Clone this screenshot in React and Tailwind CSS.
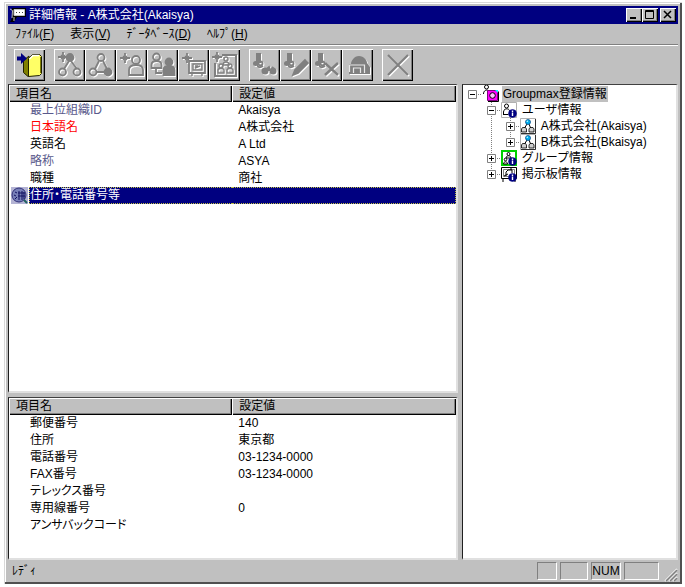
import React, { useState } from "react";

const topItems = [
  { id: 1, name: "最上位組織ID", value: "Akaisya", color: "text-[#5a5a8c]" },
  { id: 2, name: "日本語名", value: "A株式会社", color: "text-[#ff0000]" },
  { id: 3, name: "英語名", value: "A Ltd" },
  { id: 4, name: "略称", value: "ASYA", color: "text-[#5a5a8c]" },
  { id: 5, name: "職種", value: "商社" },
  { id: 6, name: "住所・電話番号等", value: "", hasDetail: true },
];

const detailItems = [
  { id: 1, name: "郵便番号", value: "140" },
  { id: 2, name: "住所", value: "東京都" },
  { id: 3, name: "電話番号", value: "03-1234-0000" },
  { id: 4, name: "FAX番号", value: "03-1234-0000" },
  { id: 5, name: "テレックス番号", value: "" },
  { id: 6, name: "専用線番号", value: "0" },
  { id: 7, name: "アンサバックコード", value: "" },
];

const menus = [
  { label: "ﾌｧｲﾙ", accessKey: "F" },
  { label: "表示", accessKey: "V" },
  { label: "ﾃﾞｰﾀﾍﾞｰｽ", accessKey: "D" },
  { label: "ﾍﾙﾌﾟ", accessKey: "H" },
];

/* ---------- toolbar icons ---------- */

// draws the shape twice so that it looks engraved like a disabled button
const Engraved = ({ children }) => (
  <svg viewBox="0 0 26 26" className="w-[26px] h-[26px]" fill="none" stroke="currentColor" strokeWidth="1.8">
    <g className="text-white" transform="translate(1 1)">{children}</g>
    <g className="text-[#808080]">{children}</g>
  </svg>
);

const Star = ({ x, y }) => (
  <g>
    <path d={`M${x - 5} ${y}h10M${x} ${y - 5}v10`} strokeWidth="1.800" />
    <path d={`M${x - 2} ${y - 2}l4 4M${x + 2} ${y - 2}l-4 4`} strokeWidth="1.200" />
  </g>
);

const Handset = () => (
  <g>
    <path d="M4 1h5v10H4z" fill="currentColor" stroke="none" />
    <circle cx="3.500" cy="11.500" r="2.500" fill="currentColor" stroke="none" />
    <path d="M5 12c1 4 3 4 6 2" strokeWidth="2" />
    <circle cx="8.500" cy="11.500" r="2" />
  </g>
);

const ExitIcon = () => (
  <svg viewBox="0 0 26 26" className="w-[26px] h-[26px]">
    <path d="M6.500 8.500L12 4v20.500h-1l-4.500-4z" fill="#808000" stroke="#202000" strokeWidth="1" />
    <path d="M11.500 6.500l4-4h7l2 2v17l-2 2-11 1z" fill="#ffff66" stroke="#202000" strokeWidth="1" />
    <path d="M12.500 7l3.500-3.500h6" stroke="#fff" strokeWidth="1.500" fill="none" />
    <path d="M23.500 5v16" stroke="#808000" strokeWidth="1" />
    <path d="M0 4.500h4V1l6 5.500L4 12V8.500H0z" fill="#000080" />
  </svg>
);

const AddTopIcon = () => (
  <Engraved>
    <Star x={6} y={5} />
    <circle cx="13" cy="5.500" r="3.500" fill="currentColor" />
    <path d="M12 9L7 17M14 9l6 8" />
    <circle cx="5.500" cy="20" r="3.500" />
    <circle cx="20" cy="20" r="3.500" />
  </Engraved>
);

const AddChildIcon = () => (
  <Engraved>
    <circle cx="13" cy="5.500" r="3.500" />
    <path d="M11 9l-4 8M15 9l4 8M9 20h8" />
    <circle cx="5" cy="20" r="3.500" />
    <circle cx="20" cy="20" r="3.500" fill="currentColor" />
  </Engraved>
);

const AddUserIcon = () => (
  <Engraved>
    <Star x={6} y={6} />
    <circle cx="17" cy="8" r="4" />
    <path d="M10 23v-5c0-4 4-5 7-5s7 1 7 5v5z" />
  </Engraved>
);

const MoveUserIcon = () => (
  <Engraved>
    <circle cx="6.500" cy="5" r="3.500" />
    <path d="M1.500 16v-3c0-3 2-4 5-4s5 1 5 4v3zM6 16v5h6" />
    <circle cx="19" cy="10" r="3.500" fill="currentColor" />
    <path d="M13.500 23v-5c0-3 2-4 5.500-4s5.500 1 5.500 4v5z" fill="currentColor" />
  </Engraved>
);

const AddBoardIcon = () => (
  <Engraved>
    <Star x={6} y={6} />
    <path d="M8 9h16v12H8z" />
    <path d="M12 12h9v6h-9zM11 21v3M21 21v3M14 16l5-2M14 14h3" strokeWidth="1.400" />
  </Engraved>
);

const AddGroupIcon = () => (
  <Engraved>
    <Star x={5} y={5} />
    <path d="M10 3h14v21H3V11" strokeWidth="2" />
    <g strokeWidth="1.400">
      <circle cx="14" cy="7" r="2" />
      <path d="M11 13c0-4 6-4 6 0z" />
      <circle cx="9" cy="14" r="2" />
      <circle cx="18" cy="14" r="2" />
      <path d="M6 21v-3c0-2 6-2 6 0v3zM15 21v-3c0-2 6-2 6 0v3z" />
    </g>
  </Engraved>
);

const SearchUserIcon = () => (
  <Engraved>
    <Handset />
    <circle cx="13" cy="19" r="3.500" fill="currentColor" stroke="none" />
    <circle cx="21" cy="19" r="3.500" fill="currentColor" stroke="none" />
    <path d="M12 19l5-4 1 3h-3M20 15l2 2" />
  </Engraved>
);

const EditIcon = () => (
  <Engraved>
    <Handset />
    <path d="M10 23l2-5L22 8l3 3-10 10z" fill="currentColor" />
  </Engraved>
);

const RemoveIcon = () => (
  <Engraved>
    <Handset />
    <path d="M11 11l13 12M24 11L11 23" strokeWidth="2.500" />
  </Engraved>
);

const HomeIcon = () => (
  <Engraved>
    <path d="M4 12h2c0-3 3-8 8-8s8 4 8 7l3 4v7H4z" fill="currentColor" stroke="none" />
    <path d="M4.500 20v-7h15v8M8.500 21v-5h7v5" stroke="#e8e8e8" strokeWidth="1.200" />
  </Engraved>
);

const CrossIcon = () => (
  <Engraved>
    <path d="M3 3l20 20M23 3L3 23" strokeWidth="2.200" />
  </Engraved>
);

const toolGroups = [
  [{ title: "終了", icon: ExitIcon, enabled: true }],
  [
    { title: "最上位組織追加", icon: AddTopIcon },
    { title: "組織追加", icon: AddChildIcon },
    { title: "ユーザ追加", icon: AddUserIcon },
    { title: "兼任ユーザ追加", icon: MoveUserIcon },
    { title: "掲示板追加", icon: AddBoardIcon },
    { title: "グループ追加", icon: AddGroupIcon },
  ],
  [
    { title: "参照", icon: SearchUserIcon },
    { title: "変更", icon: EditIcon },
    { title: "解除", icon: RemoveIcon },
    { title: "格納", icon: HomeIcon },
  ],
  [{ title: "削除", icon: CrossIcon }],
];

/* ---------- tree icons ---------- */

const InfoBadge = () => (
  <g>
    <circle cx="11.500" cy="11.500" r="4" fill="#000080" stroke="#000080" strokeWidth=".5" />
    <path d="M11.500 8.500v1.500M11.500 10.500v3.500" stroke="#fff" strokeWidth="1.400" />
  </g>
);

const RootIcon = () => (
  <svg viewBox="0 0 18 16" className="w-[18px] h-4 overflow-visible" fill="none" stroke="#000">
    <circle cx="4.500" cy="1" r="2" fill="#fff" />
    <path d="M1.500 8c0-5 6-5 6-1" fill="#fff" />
    <path d="M5.500 4.500h10v10h-10z" fill="#ff00ff" stroke="#800080" />
    <path d="M6 15.500h10.500v-10" />
    <circle cx="10.500" cy="9.500" r="2.800" fill="#ffc0ff" />
    <path d="M13 4h3v3z" fill="#00ffff" stroke="none" />
  </svg>
);

const UserInfoIcon = () => (
  <svg viewBox="0 0 16 16" className="w-4 h-4" fill="none" stroke="#000">
    <path d="M.5.5h15v15H.5z" fill="#fff" stroke="#b0b0b0" />
    <circle cx="5.500" cy="4" r="2" />
    <path d="M2.500 13V10c0-4 6-4 6-1M2.500 12.500h5" />
    <InfoBadge />
  </svg>
);

const CompanyIcon = () => (
  <svg viewBox="0 0 16 16" className="w-4 h-4" fill="none" stroke="#000">
    <path d="M.5.5h15v15H.5z" fill="#fff" stroke="#b0b0b0" />
    <path d="M15.500 1v14.500H1" stroke="#303030" />
    <path d="M7 6l-3 5M9 6l2 5" />
    <circle cx="8" cy="4" r="2.500" fill="#00b0f0" stroke="#004080" strokeWidth=".7" />
    <circle cx="7.300" cy="3.300" r=".8" fill="#c0ffff" stroke="none" />
    <path d="M1.500 14v-3l1-1.500h3l1 1.500v3zM9 14v-3l1-1.500h3l1 1.500v3z" fill="#d0d0d0" strokeWidth=".8" />
  </svg>
);

const GroupInfoIcon = () => (
  <svg viewBox="0 0 16 16" className="w-4 h-4" fill="none" stroke="#000">
    <path d="M1 1h14v14H1z" fill="#fff" stroke="#00d000" strokeWidth="2" />
    <circle cx="7.500" cy="4" r="1.500" />
    <path d="M5 8c0-3 5-3 5 0z" />
    <circle cx="4.500" cy="9.500" r="1.300" />
    <path d="M2.500 14c0-3 4-3 4 0z" />
    <InfoBadge />
  </svg>
);

const BoardInfoIcon = () => (
  <svg viewBox="0 0 16 16" className="w-4 h-4" fill="none" stroke="#000">
    <path d="M.5 1.500h15v11H.5zM2 13v3M14 13v3" fill="#fff" />
    <path d="M2.500 3.500h11v7h-11z" stroke="#808080" />
    <path d="M5 10V6l2-2h4v3M3 10l4-2M10 2v2" />
    <InfoBadge />
  </svg>
);

const treeData = {
  id: "root",
  label: "Groupmax登録情報",
  icon: RootIcon,
  children: [
    {
      id: "user",
      label: "ユーザ情報",
      icon: UserInfoIcon,
      children: [
        { id: "a", label: "A株式会社(Akaisya)", icon: CompanyIcon, children: [] },
        { id: "b", label: "B株式会社(Bkaisya)", icon: CompanyIcon, children: [] },
      ],
    },
    { id: "group", label: "グループ情報", icon: GroupInfoIcon, children: [] },
    { id: "board", label: "掲示板情報", icon: BoardInfoIcon, children: [] },
  ],
};

// one 19px column of the dotted guide lines
const Guide = ({ path }) => (
  <svg viewBox="0 0 19 16" className="w-[19px] h-4 shrink-0">
    <path d={path} fill="none" stroke="#808080" strokeDasharray="1 1" />
  </svg>
);

const TreeNode = ({ node, guides = [], isRoot, isLast, expanded, onToggle, selected, onSelect }) => {
  const Icon = node.icon;
  const open = expanded.includes(node.id);
  const vertical = isRoot ? "" : isLast ? "M9.5 0v8" : "M9.5 0v16";
  return (
    <li>
      <div className="flex items-center h-4">
        {guides.map((line, index) => (
          <Guide key={index} path={line ? "M9.5 0v16" : ""} />
        ))}
        <button className="shrink-0" aria-label={node.label + (open ? "を閉じる" : "を開く")} onClick={() => onToggle(node.id)}>
          <svg viewBox="0 0 19 16" className="block w-[19px] h-4">
            <path d={vertical + "M9 8.500h10"} fill="none" stroke="#808080" strokeDasharray="1 1" />
            <path d="M5.500 4.500h8v8h-8z" fill="#fff" stroke="#808080" />
            <path d={open ? "M7 8.500h5" : "M7 8.500h5M9.500 6v5"} stroke="#000" />
          </svg>
        </button>
        <span className="w-5 shrink-0 flex">
          <Icon />
        </span>
        <button
          className={`px-px h-4 leading-4 whitespace-nowrap ${selected === node.id ? "bg-[#c0c0c0]" : ""}`}
          onClick={() => onSelect(node.id)}
        >
          {node.label}
        </button>
      </div>
      {open && node.children.length > 0 && (
        <ul>
          {node.children.map((child, index) => (
            <TreeNode
              key={child.id}
              node={child}
              guides={isRoot ? [false] : [...guides, !isLast]}
              isLast={index === node.children.length - 1}
              expanded={expanded}
              onToggle={onToggle}
              selected={selected}
              onSelect={onSelect}
            />
          ))}
        </ul>
      )}
    </li>
  );
};

/* ---------- list view ---------- */

const DetailMark = () => (
  <svg viewBox="0 0 17 17" className="w-[17px] h-[17px] shrink-0">
    <path d="M0 0h17v17H0z" fill="#b4b4d4" />
    <circle cx="8" cy="8" r="7" fill="#7880b8" stroke="#303078" />
    <path d="M4 5l2 1M3 8l2 1M4 12l2-2M8 4v9M11 4v9M13 5v7M7 6h7M7 9h7" stroke="#101060" fill="none" />
    <path d="M13 13l3 3" stroke="#206060" strokeWidth="2" />
  </svg>
);

const ItemTable = ({ items, selected, onSelect }) => (
  <table className="w-full table-fixed border-collapse [font-feature-settings:'palt']">
    <thead>
      <tr className="h-[17px] leading-4 text-left">
        {["項目名", "設定値"].map((title) => (
          <th
            key={title}
            scope="col"
            className="w-1/2 p-0 pl-[7px] font-normal bg-[#c0c0c0] shadow-[inset_1px_1px_#fff,inset_-1px_-1px_#000,inset_-2px_-2px_#808080]"
          >
            {title}
          </th>
        ))}
      </tr>
    </thead>
    <tbody>
      {items.map((item) => {
        const active = selected === item.id;
        const line = active ? "bg-[#000080] text-white border-[#c0c040]" : "border-transparent " + (item.color || "");
        return (
          <tr key={item.id} className="h-[17px] leading-[15px]" onClick={() => onSelect && onSelect(item.id)}>
            <td className="p-0">
              <div className="flex">
                <span className="w-[20px] pl-[2px] h-[17px] shrink-0">{item.hasDetail && <DetailMark />}</span>
                <span className={`grow h-[17px] border-y border-l border-dotted whitespace-nowrap ${line}`}>
                  {item.name}
                </span>
              </div>
            </td>
            <td className="p-0">
              <div
                className={`h-[17px] pl-[6px] border-y border-r border-dotted whitespace-nowrap ${
                  active ? line : "border-transparent"
                }`}
              >
                {item.value}
              </div>
            </td>
          </tr>
        );
      })}
    </tbody>
  </table>
);

const sunken =
  "bg-white overflow-hidden border-t border-l border-t-[#404040] border-l-[#202020] border-r-2 border-b-2 border-r-[#e0e0e0] border-b-[#e0e0e0]";
const raised = "bg-[#c0c0c0] shadow-[inset_1px_1px_#fff,inset_-1px_-1px_#000,inset_-2px_-2px_#808080]";
const statusCell = "h-[18px] border border-t-[#808080] border-l-[#808080] border-r-white border-b-white";

const App = () => {
  const [selectedItem, setSelectedItem] = useState(6);
  const [selectedNode, setSelectedNode] = useState("root");
  const [expanded, setExpanded] = useState(["root", "user"]);

  const handleToggle = (id) => {
    setExpanded(expanded.includes(id) ? expanded.filter((item) => item !== id) : [...expanded, id]);
  };

  return (
    <div className="h-screen bg-white pt-[2px] pl-1 pr-[3px] pb-[3px] text-[12px] text-black font-['Liberation_Sans','Noto_Sans_CJK_JP',sans-serif]">
      <div className="h-full flex flex-col bg-[#c0c0c0] p-1 pb-0 shadow-[inset_1px_1px_#d8d8d8,inset_-2px_-2px_#505050,inset_2px_2px_#fff]">
        <header className="h-[18px] shrink-0 flex items-center bg-[#000080] text-white px-[2px]">
          <svg viewBox="0 0 16 16" className="w-4 h-4" fill="none">
            <path d="M2 1h14v9H7l-3 5H0l2-4z" fill="#000" />
            <path d="M4 2.500h10.500v6H4z" fill="#fff" stroke="#c0c0c0" />
            <path d="M6 5.500h1M9 5.500h1M12 5.500h1" stroke="#404040" />
            <path d="M0 2l2.500 1.500L2 11M4 10v4" stroke="#c0c0c0" />
          </svg>
          <h1 className="grow pl-[3px] leading-[18px] whitespace-nowrap">詳細情報 - A株式会社(Akaisya)</h1>
          <div className="flex text-black">
            <button aria-label="最小化" className={`w-4 h-[14px] ${raised}`}>
              <svg viewBox="0 0 16 14" className="block">
                <path d="M4 10h6" stroke="#000" strokeWidth="2" />
              </svg>
            </button>
            <button aria-label="最大化" className={`w-4 h-[14px] ${raised}`}>
              <svg viewBox="0 0 16 14" className="block" fill="none" stroke="#000">
                <path d="M3.500 2.500h8v8h-8zM3 3.500h9" />
              </svg>
            </button>
            <button aria-label="閉じる" className={`w-4 h-[14px] ml-[2px] ${raised}`}>
              <svg viewBox="0 0 16 14" className="block" stroke="#000" strokeWidth="1.500">
                <path d="M4 3l7 7M11 3l-7 7" />
              </svg>
            </button>
          </div>
        </header>

        <nav className="h-[20px] shrink-0 flex items-center gap-4 pl-[7px]">
          {menus.map((menu) => (
            <button key={menu.label} className="leading-[18px] whitespace-nowrap">
              {menu.label}(<u>{menu.accessKey}</u>)
            </button>
          ))}
        </nav>

        <div className="h-10 shrink-0 flex items-start gap-[9px] pl-[6px] pt-1 border-t border-[#808080] shadow-[inset_0_1px_#fff]">
          {toolGroups.map((group, index) => (
            <div key={index} className="flex">
              {group.map((tool) => (
                <button
                  key={tool.title}
                  title={tool.title}
                  disabled={!tool.enabled}
                  className={`w-[31px] h-[32px] flex items-center justify-center ${raised}`}
                >
                  <tool.icon />
                </button>
              ))}
            </div>
          ))}
        </div>

        <main className="grow min-h-0 flex gap-1">
          <div className="grow-[451] basis-0 min-w-0 flex flex-col gap-1">
            <section className={`grow-[309] basis-0 min-h-0 ${sunken}`}>
              <ItemTable items={topItems} selected={selectedItem} onSelect={setSelectedItem} />
            </section>
            <section className={`grow-[162] basis-0 min-h-0 ${sunken}`}>
              <ItemTable items={detailItems} />
            </section>
          </div>
          <aside className={`grow-[214] basis-0 min-w-0 pt-px ${sunken}`}>
            <ul>
              <TreeNode
                node={treeData}
                isRoot
                expanded={expanded}
                onToggle={handleToggle}
                selected={selectedNode}
                onSelect={setSelectedNode}
              />
            </ul>
          </aside>
        </main>

        <footer className="h-[24px] shrink-0 flex items-center gap-[3px] pl-1 pb-[2px]">
          <span className="grow">ﾚﾃﾞｨ</span>
          <span className={`w-5 ${statusCell}`} />
          <span className={`w-7 ${statusCell}`} />
          <span className={`w-[30px] text-center leading-4 ${statusCell}`}>NUM</span>
          <span className={`w-[35px] ${statusCell}`} />
          <svg viewBox="0 0 14 14" className="w-[14px] h-[14px] ml-[2px] self-end" fill="none">
            <path d="M1 13L13 1M5 13l8-8M9 13l4-4" stroke="#fff" strokeWidth="1.500" />
            <path d="M2 13L13 2M6 13l7-7M10 13l3-3" stroke="#808080" strokeWidth="1.500" />
          </svg>
        </footer>
      </div>
    </div>
  );
};

export default App;
